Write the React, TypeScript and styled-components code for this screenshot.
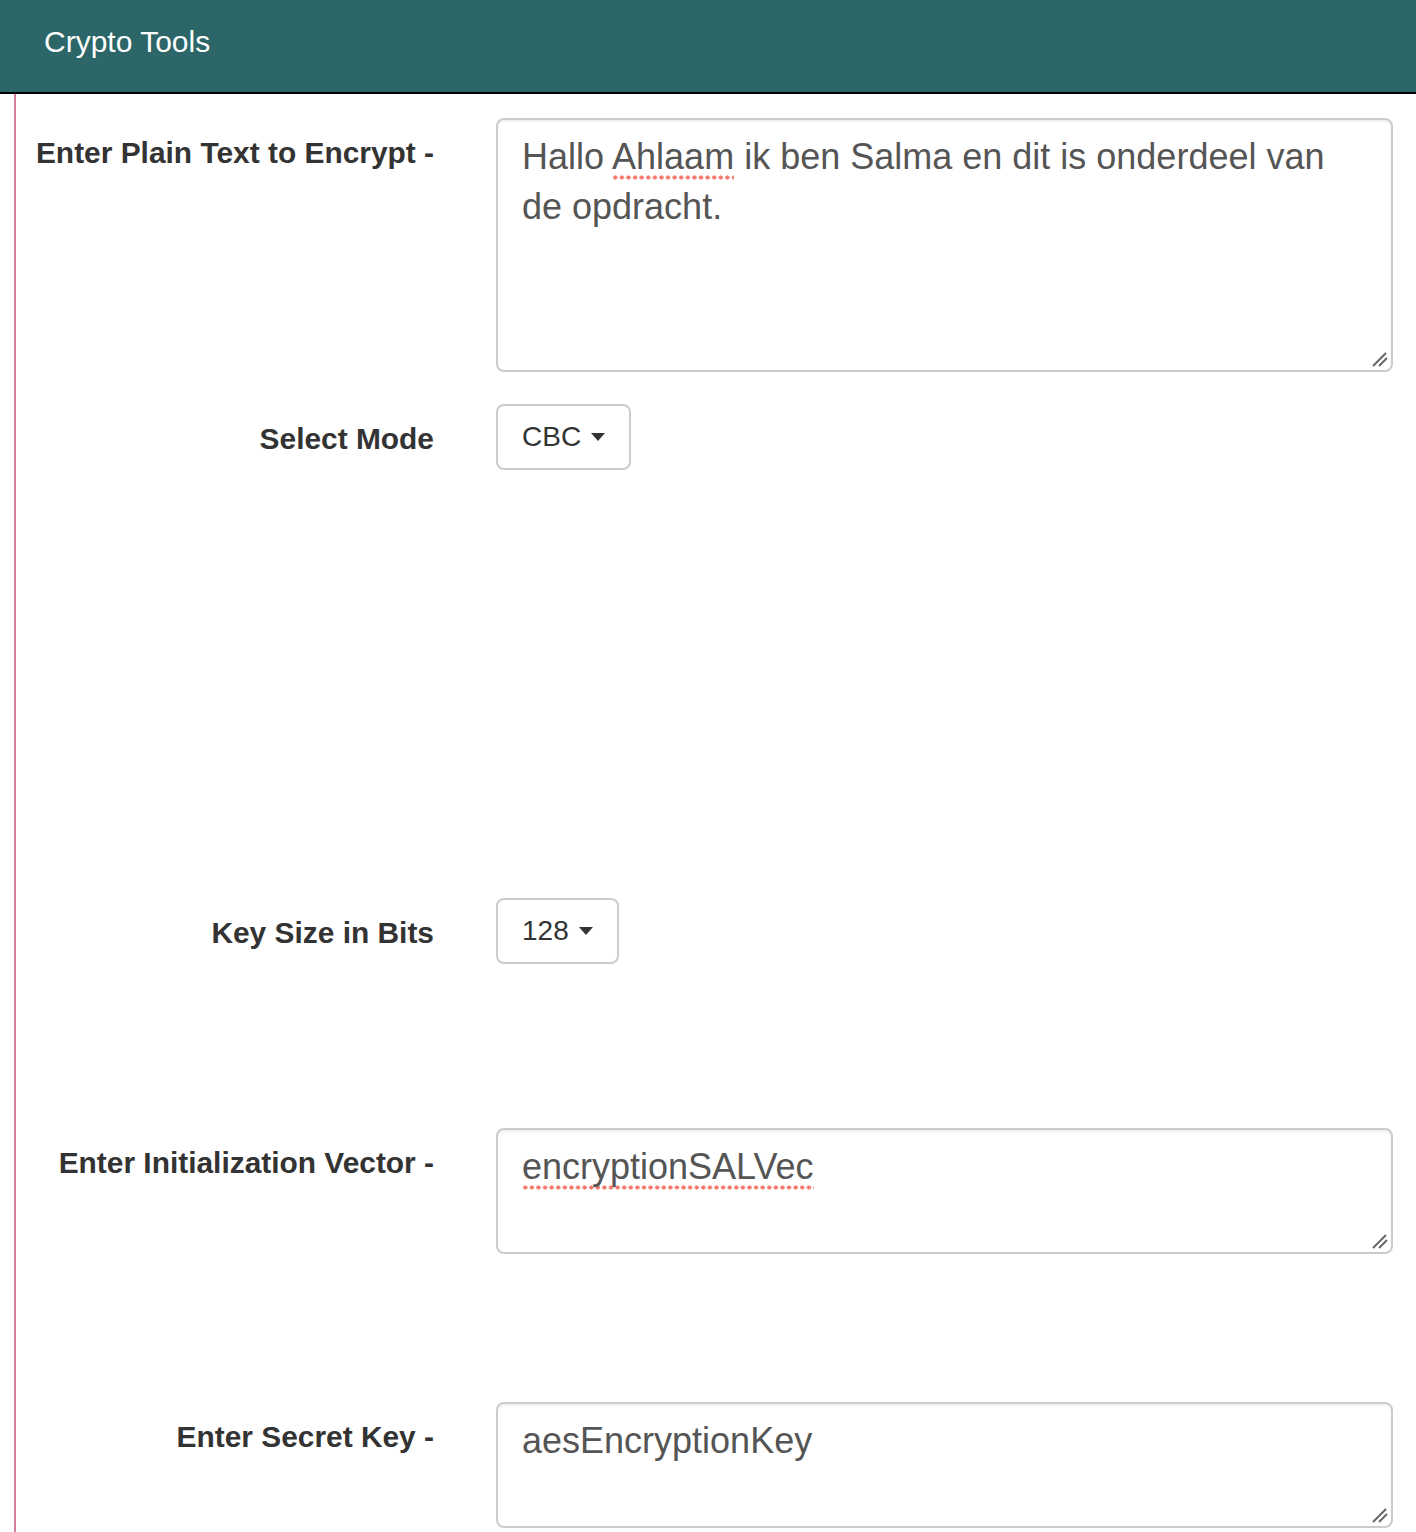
import React from "react";
import styled, { createGlobalStyle } from "styled-components";

const GlobalStyle = createGlobalStyle`
  html, body {
    margin: 0;
    padding: 0;
    background: #ffffff;
    font-family: "Liberation Sans", Arial, Helvetica, sans-serif;
  }
  * { box-sizing: border-box; }
`;

const Header = styled.header`
  height: 94px;
  background: #2c6668;
  border-bottom: 2px solid #000000;
  padding: 27px 0 0 44px;
`;

const Brand = styled.div`
  color: #ffffff;
  font-size: 30px;
  line-height: 1;
`;

const Main = styled.main`
  margin-left: 14px;
  border-left: 2px solid #d87ba0;
  min-height: calc(100vh - 94px);
  padding: 24px 23px 4px 0;
`;

const Row = styled.div<{ $gap: number }>`
  display: grid;
  grid-template-columns: 418px 1fr;
  column-gap: 62px;
  align-items: start;
  margin-bottom: ${(p) => p.$gap}px;
`;

const Label = styled.label`
  text-align: right;
  white-space: nowrap;
  font-weight: bold;
  font-size: 29.9px;
  line-height: 42px;
  color: #333333;
  padding-top: 14px;
`;

const Field = styled.div<{ $height: number }>`
  position: relative;
  height: ${(p) => p.$height}px;
  border: 2px solid #cccccc;
  border-radius: 8px;
  box-shadow: inset 0 2px 2px rgba(0, 0, 0, 0.06);
  padding: 12px 24px;
  font-size: 36px;
  line-height: 50px;
  color: #555555;
`;

const Misspelled = styled.span`
  padding-bottom: 3px;
  background-image: radial-gradient(circle, #f47a6e 1.9px, transparent 2.3px);
  background-size: 6.6px 5px;
  background-repeat: repeat-x;
  background-position: 0 100%;
`;

const Grip = styled.svg`
  position: absolute;
  right: 3px;
  bottom: 3px;
  width: 16px;
  height: 16px;
`;

const Dropdown = styled.button`
  display: inline-flex;
  align-items: center;
  gap: 10px;
  height: 66px;
  padding: 0 24px;
  background: #ffffff;
  border: 2px solid #cccccc;
  border-radius: 8px;
  font-family: "Liberation Sans", Arial, Helvetica, sans-serif;
  font-size: 28px;
  color: #333333;
  justify-self: start;
`;

const Caret = styled.span`
  width: 0;
  height: 0;
  border-left: 7.5px solid transparent;
  border-right: 7.5px solid transparent;
  border-top: 8px solid #333333;
`;

const ResizeGrip = () => (
  <Grip viewBox="0 0 16 16">
    <line x1="1" y1="15" x2="14" y2="2" stroke="#666" strokeWidth="2" />
    <line x1="7" y1="15" x2="15" y2="7" stroke="#666" strokeWidth="2" />
  </Grip>
);

export default function App() {
  return (
    <>
      <GlobalStyle />
      <Header>
        <Brand>Crypto Tools</Brand>
      </Header>
      <Main>
        <Row $gap={32}>
          <Label>Enter Plain Text to Encrypt -</Label>
          <Field $height={254}>
            Hallo <Misspelled>Ahlaam</Misspelled> ik ben Salma en dit is onderdeel van de opdracht.
            <ResizeGrip />
          </Field>
        </Row>
        <Row $gap={428}>
          <Label>Select Mode</Label>
          <Dropdown>
            CBC <Caret />
          </Dropdown>
        </Row>
        <Row $gap={164}>
          <Label>Key Size in Bits</Label>
          <Dropdown>
            128 <Caret />
          </Dropdown>
        </Row>
        <Row $gap={148}>
          <Label>Enter Initialization Vector -</Label>
          <Field $height={126}>
            <Misspelled>encryptionSALVec</Misspelled>
            <ResizeGrip />
          </Field>
        </Row>
        <Row $gap={0}>
          <Label>Enter Secret Key -</Label>
          <Field $height={126}>
            aesEncryptionKey
            <ResizeGrip />
          </Field>
        </Row>
      </Main>
    </>
  );
}
